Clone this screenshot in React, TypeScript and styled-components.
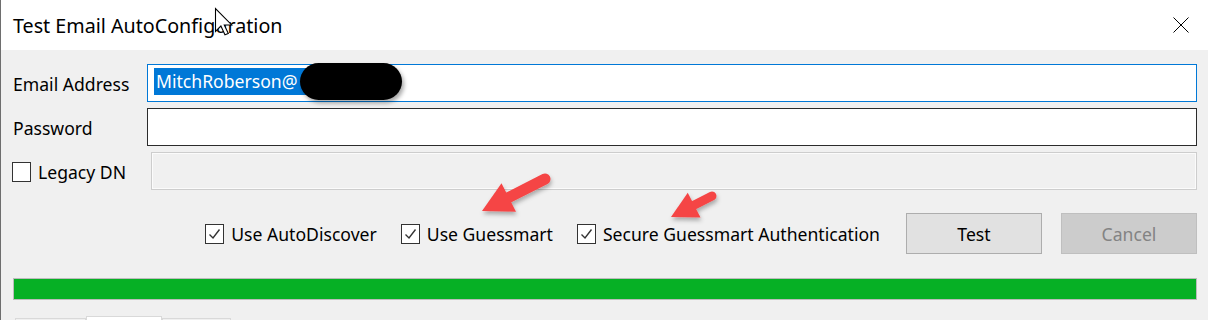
import styled, { createGlobalStyle } from "styled-components";

const GlobalStyle = createGlobalStyle`
  html, body {
    margin: 0;
    padding: 0;
    background: #f0f0f0;
  }
  body {
    font-family: "Noto Sans", "Open Sans", sans-serif;
    color: #000;
  }
`;

const Window = styled.div`
  position: relative;
  width: 1208px;
  height: 320px;
  overflow: hidden;
  background: #f0f0f0;
  box-sizing: border-box;
  border-left: 1px solid #6e6e6e;
`;

const TitleBar = styled.div`
  display: flex;
  align-items: center;
  justify-content: space-between;
  height: 50px;
  background: #fff;
  padding: 0 19px 0 12px;
`;

const Title = styled.div`
  font-size: 19.7px;
  padding-top: 1px;
`;

const CloseButton = styled.div`
  display: flex;
  width: 16px;
  height: 16px;
`;

const Body = styled.div`
  display: flex;
  flex-direction: column;
  padding: 14px 11px 0 11px;
`;

const FieldRow = styled.div<{ $labelWidth: number }>`
  display: grid;
  grid-template-columns: ${(p) => p.$labelWidth}px 1fr;
  align-items: center;
  height: 38px;
  margin-bottom: 6px;
`;

const FieldLabel = styled.label<{ $inset?: number }>`
  display: flex;
  align-items: center;
  gap: 7px;
  font-size: 17.6px;
  padding-left: ${(p) => p.$inset ?? 1}px;
  padding-top: 1px;
`;

const TextBox = styled.div<{ $variant: "focused" | "normal" | "disabled" }>`
  position: relative;
  display: flex;
  align-items: center;
  height: 38px;
  box-sizing: border-box;
  padding-left: 6px;
  font-size: 17.6px;
  background: ${(p) => (p.$variant === "disabled" ? "#f0f0f0" : "#fff")};
  border: 1px solid
    ${(p) =>
      p.$variant === "focused"
        ? "#0078d7"
        : p.$variant === "normal"
        ? "#2b2b2b"
        : "#cdcdcd"};
  box-shadow: ${(p) =>
    p.$variant === "disabled" ? "inset 0 0 0 1px #fbfbfb" : "none"};
`;

const Selection = styled.span`
  display: inline-block;
  background: #0078d7;
  color: #fff;
  line-height: 26px;
  padding: 0 60px 1px 2px;
  margin-top: -4px;
`;

const Redaction = styled.div`
  position: absolute;
  left: 152px;
  top: -2px;
  width: 102px;
  height: 37px;
  border-radius: 19px;
  background: #000;
  box-shadow: 2px 3px 4px rgba(0, 0, 0, 0.35);
`;

const ActionRow = styled.div`
  display: flex;
  align-items: center;
  justify-content: flex-end;
  height: 41px;
  margin-top: 17px;
`;

const CheckItem = styled.label`
  display: flex;
  align-items: center;
  gap: 7px;
  font-size: 17.6px;
  margin-right: 24px;
`;

const Box = styled.span`
  display: flex;
  width: 19px;
  height: 20px;
  box-sizing: border-box;
  border: 1px solid #333;
  background: #fff;
`;

const Button = styled.div<{ $disabled?: boolean }>`
  display: flex;
  align-items: center;
  justify-content: center;
  width: 136px;
  height: 41px;
  box-sizing: border-box;
  margin-left: ${(p) => (p.$disabled ? "19px" : "2px")};
  font-size: 17.6px;
  background: ${(p) => (p.$disabled ? "#cccccc" : "#e1e1e1")};
  border: 1px solid ${(p) => (p.$disabled ? "#bfbfbf" : "#adadad")};
  color: ${(p) => (p.$disabled ? "#838383" : "#000")};
`;

const Progress = styled.div`
  display: flex;
  height: 22px;
  margin: 24px 0 0 1px;
  box-sizing: border-box;
  border: 1px solid #bcbcbc;
  background: #e6e6e6;
`;

const ProgressFill = styled.div`
  flex: 1;
  background: #06b025;
`;

const TabStrip = styled.div`
  display: flex;
  align-items: flex-end;
  margin: 16px 0 0 3px;
`;

const Tab = styled.div<{ $active?: boolean; $width: number }>`
  width: ${(p) => p.$width}px;
  height: ${(p) => (p.$active ? 10 : 8)}px;
  box-sizing: border-box;
  margin-top: ${(p) => (p.$active ? 0 : 2)}px;
  align-self: flex-start;
  background: ${(p) => (p.$active ? "#fff" : "#f0f0f0")};
  border: 1px solid #d9d9d9;
  border-bottom: none;
`;

const Overlay = styled.svg`
  position: absolute;
  left: 0;
  top: 0;
  pointer-events: none;
`;

const Check = () => (
  <svg width="17" height="18" viewBox="0 0 17 18">
    <polyline
      points="3.5,9.5 7,13 13.5,4.5"
      fill="none"
      stroke="#333"
      strokeWidth="1.4"
    />
  </svg>
);

const CheckBox = ({ checked }: { checked?: boolean }) => (
  <Box>{checked && <Check />}</Box>
);

type ArrowProps = {
  tail: [number, number];
  tip: [number, number];
  head: number;
  half: number;
  width: number;
};

const Arrow = ({ tail, tip, head, half, width }: ArrowProps) => {
  const dx = tip[0] - tail[0];
  const dy = tip[1] - tail[1];
  const len = Math.hypot(dx, dy);
  const ux = dx / len;
  const uy = dy / len;
  const bx = tip[0] - head * ux;
  const by = tip[1] - head * uy;
  const nx = -uy;
  const ny = ux;
  const wing1 = `${bx + half * nx},${by + half * ny}`;
  const wing2 = `${bx - half * nx},${by - half * ny}`;
  return (
    <g filter="url(#shadow)">
      <line
        x1={tail[0]}
        y1={tail[1]}
        x2={bx + 2 * ux}
        y2={by + 2 * uy}
        stroke="#f54545"
        strokeWidth={width}
        strokeLinecap="round"
      />
      <polygon points={`${tip[0]},${tip[1]} ${wing1} ${wing2}`} fill="#f54545" />
    </g>
  );
};

export default function App() {
  return (
    <>
      <GlobalStyle />
      <Window>
        <TitleBar>
          <Title>Test Email AutoConfiguration</Title>
          <CloseButton>
            <svg width="16" height="16" viewBox="0 0 16 16">
              <path d="M0.5 0.5 L15.5 15.5 M15.5 0.5 L0.5 15.5" stroke="#000" strokeWidth="1" />
            </svg>
          </CloseButton>
        </TitleBar>
        <Body>
          <FieldRow $labelWidth={135}>
            <FieldLabel>Email Address</FieldLabel>
            <TextBox $variant="focused">
              <Selection>MitchRoberson@</Selection>
              <Redaction />
            </TextBox>
          </FieldRow>
          <FieldRow $labelWidth={135}>
            <FieldLabel>Password</FieldLabel>
            <TextBox $variant="normal" />
          </FieldRow>
          <FieldRow $labelWidth={139}>
            <FieldLabel $inset={0}>
              <CheckBox />
              Legacy DN
            </FieldLabel>
            <TextBox $variant="disabled" />
          </FieldRow>
          <ActionRow>
            <CheckItem>
              <CheckBox checked />
              Use AutoDiscover
            </CheckItem>
            <CheckItem>
              <CheckBox checked />
              Use Guessmart
            </CheckItem>
            <CheckItem>
              <CheckBox checked />
              Secure Guessmart Authentication
            </CheckItem>
            <Button>Test</Button>
            <Button $disabled>Cancel</Button>
          </ActionRow>
          <Progress>
            <ProgressFill />
          </Progress>
          <TabStrip>
            <Tab $width={71} />
            <Tab $active $width={76} />
            <Tab $width={69} />
          </TabStrip>
        </Body>
        <Overlay width="1208" height="320" viewBox="0 0 1208 320">
          <defs>
            <filter id="shadow" x="-20%" y="-20%" width="150%" height="160%">
              <feDropShadow dx="1" dy="3" stdDeviation="2" floodColor="#000" floodOpacity="0.3" />
            </filter>
          </defs>
          <Arrow tail={[544, 179]} tip={[481, 211]} head={30} half={16} width={11} />
          <Arrow tail={[711, 196]} tip={[670, 217]} head={26} half={14} width={9} />
          <g transform="translate(214.5 8.5) scale(1.35)">
            <path
              d="M0 0 L0 17 L4 13 L7 19.5 L9.5 18.5 L6.5 12.2 L12 12.2 Z"
              fill="#fff"
              stroke="#000"
              strokeWidth="0.8"
              strokeLinejoin="miter"
            />
          </g>
        </Overlay>
      </Window>
    </>
  );
}
